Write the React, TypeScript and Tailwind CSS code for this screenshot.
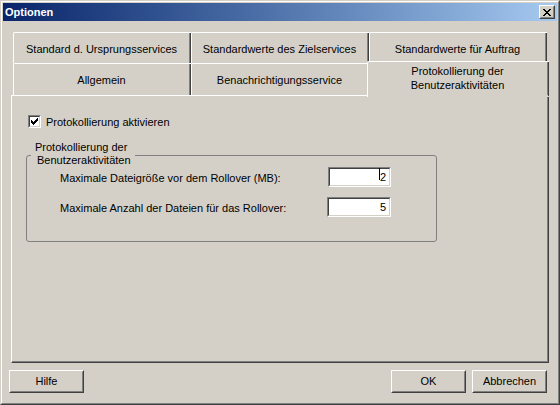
import React from "react";

const font = { fontFamily: '"Liberation Sans", Arial, sans-serif' };

function Raised({ className = "", children }: { className?: string; children?: React.ReactNode }) {
  return (
    <div className={`border border-t-white border-l-white border-b-[#404040] border-r-[#404040] ${className}`}>
      <div className="w-full h-full border border-t-[#d4d0c8] border-l-[#d4d0c8] border-b-[#808080] border-r-[#808080] flex items-center justify-center">
        {children}
      </div>
    </div>
  );
}

function Sunken({ className = "", children, justify = "justify-end" }: { className?: string; children?: React.ReactNode; justify?: string }) {
  return (
    <div className={`border border-t-[#808080] border-l-[#808080] border-b-white border-r-white ${className}`}>
      <div className={`w-full h-full border border-t-[#404040] border-l-[#404040] border-b-[#d4d0c8] border-r-[#d4d0c8] bg-white flex items-center ${justify}`}>
        {children}
      </div>
    </div>
  );
}

function Tab({ label, pt = "pt-[2px]" }: { label: string; pt?: string }) {
  return (
    <div className="w-[178px] h-full flex border-t border-l border-t-white border-l-white rounded-tl-[2px]">
      <div className={`flex-1 flex items-center justify-center ${pt}`}>{label}</div>
      <div className="w-[1px] bg-[#808080]" />
      <div className="w-[1px] bg-[#404040]" />
    </div>
  );
}

export default function App() {
  return (
    <div
      className="w-[560px] h-[405px] bg-[#d4d0c8] border border-t-[#d4d0c8] border-l-[#d4d0c8] border-b-[#404040] border-r-[#404040] text-[11px] text-black"
      style={font}
    >
      <div className="w-full h-full border border-t-white border-l-white border-b-[#808080] border-r-[#808080] p-[1px] flex flex-col">
        {/* Title bar */}
        <div className="h-[18px] flex items-center bg-gradient-to-r from-[#0a246a] to-[#a6caf0] pl-[2px] pr-[2px]">
          <span className="text-white font-bold text-[11px] leading-none">Optionen</span>
          <div className="flex-1" />
          <Raised className="w-[16px] h-[14px] bg-[#d4d0c8]">
            <svg width="8" height="7" viewBox="0 0 8 7" shapeRendering="crispEdges">
              <path d="M0 0h2v1h-2zM6 0h2v1h-2zM1 1h2v1h-2zM5 1h2v1h-2zM2 2h4v1h-4zM3 3h2v1h-2zM2 4h4v1h-4zM1 5h2v1h-2zM5 5h2v1h-2zM0 6h2v1h-2zM6 6h2v1h-2z" fill="#000" />
            </svg>
          </Raised>
        </div>

        {/* Tab control */}
        <div className="ml-[8px] w-[538px] mt-[11px] flex flex-col">
          <div className="h-[31px] flex pl-[2px]">
            <Tab label="Standard d. Ursprungsservices" />
            <Tab label="Standardwerte des Zielservices" />
            <Tab label="Standardwerte für Auftrag" />
          </div>
          <div className="h-[32px] flex pl-[2px]">
            <Tab label="Allgemein" />
            <Tab label="Benachrichtigungsservice" />
            <div className="relative z-10 -ml-[2px] -mt-[2px] w-[182px] h-[36px] flex border-t border-l border-t-white border-l-white bg-[#d4d0c8] rounded-tl-[2px]">
              <div className="flex-1 flex flex-col items-center pt-[2px] leading-[14px]">
                <span>Protokollierung der</span>
                <span>Benutzeraktivitäten</span>
              </div>
              <div className="w-[1px] bg-[#808080] mb-[2px]" />
              <div className="w-[1px] bg-[#404040] mb-[1px]" />
            </div>
          </div>
          {/* Panel */}
          <div className="h-[268px] border border-t-white border-l-white border-b-[#404040] border-r-[#404040]">
            <div className="w-full h-full border-b border-r border-b-[#808080] border-r-[#808080] flex flex-col">
              {/* Checkbox */}
              <div className="mt-[19px] ml-[16px] h-[13px] flex items-center">
                <Sunken className="w-[13px] h-[13px]" justify="justify-center">
                  <svg width="7" height="7" viewBox="0 0 7 7" shapeRendering="crispEdges">
                    <path d="M0 2h1v3h-1zM1 3h1v3h-1zM2 4h1v3h-1zM3 3h1v3h-1zM4 2h1v3h-1zM5 1h1v3h-1zM6 0h1v3h-1z" fill="#000" />
                  </svg>
                </Sunken>
                <span className="ml-[5px] leading-[13px] pt-[2px]">Protokollierung aktivieren</span>
              </div>

              {/* Group box */}
              <div className="relative ml-[14px] mt-[27px] w-[411px] h-[87px] border border-[#808080] rounded-[3px] flex flex-col">
                <div className="absolute left-[4px] -top-[15px] bg-[#d4d0c8] pr-[4px] pl-[4px] flex flex-col leading-[13px] pb-[2px]">
                  <span>Protokollierung der</span>
                  <span className="pl-[2px]">Benutzeraktivitäten</span>
                </div>
                <div className="mt-[11px] flex items-center h-[20px]">
                  <span className="ml-[33px] w-[268px] pt-[3px]">Maximale Dateigröße vor dem Rollover (MB):</span>
                  <Sunken className="w-[63px] h-[20px]">
                    <span className="relative pr-[3px] pt-[1px]">
                      <span className="absolute -left-[1px] top-[0px] w-[1px] h-[12px] bg-black" />
                      2
                    </span>
                  </Sunken>
                </div>
                <div className="mt-[10px] flex items-center h-[20px]">
                  <span className="ml-[33px] w-[267px] pt-[3px]">Maximale Anzahl der Dateien für das Rollover:</span>
                  <Sunken className="w-[64px] h-[20px]">
                    <span className="pr-[3px] pt-[1px]">5</span>
                  </Sunken>
                </div>
              </div>
            </div>
          </div>
        </div>

        {/* Buttons */}
        <div className="mt-[7px] flex h-[23px]">
          <Raised className="ml-[6px] w-[75px] h-[23px]">Hilfe</Raised>
          <div className="flex-1" />
          <Raised className="w-[75px] h-[23px]">OK</Raised>
          <Raised className="ml-[6px] mr-[10px] w-[75px] h-[23px]">Abbrechen</Raised>
        </div>
      </div>
    </div>
  );
}
